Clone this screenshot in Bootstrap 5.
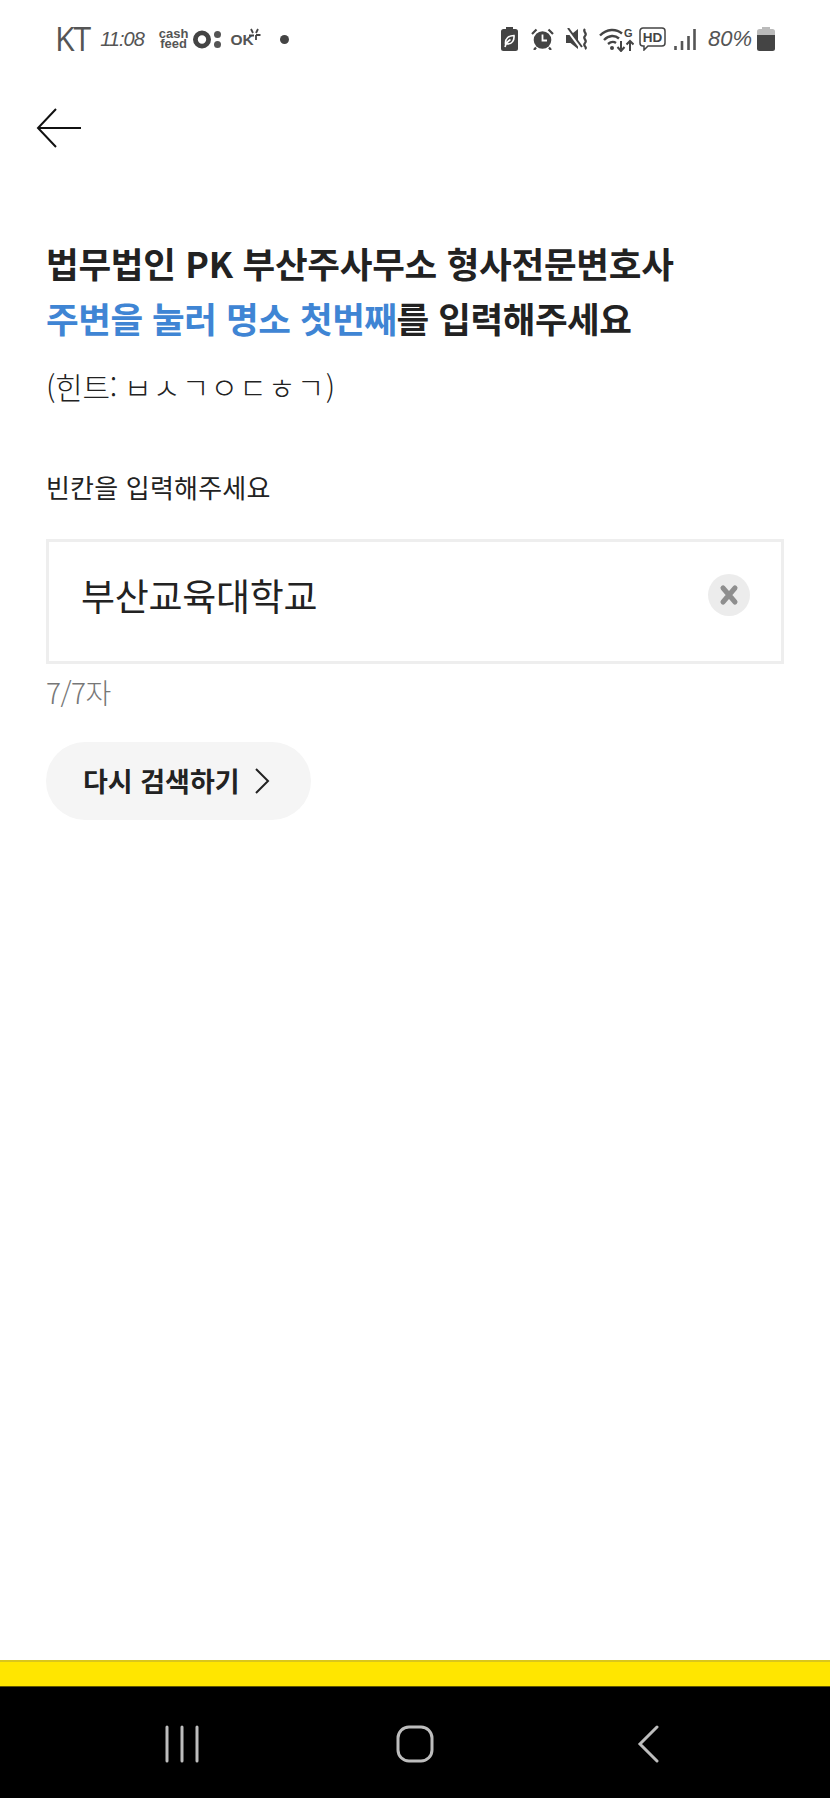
<!DOCTYPE html>
<html lang="ko">
  <head>
    <meta charset="UTF-8" />
    <meta name="viewport" content="width=device-width, initial-scale=1.0" />
    <title>빈칸 입력</title>
    <link
      href="https://cdn.jsdelivr.net/npm/bootstrap@5.3.2/dist/css/bootstrap.min.css"
      rel="stylesheet"
    />
    <style>
      html,
      body {
        height: 100%;
      }
      body {
        font-family: "Noto Sans CJK KR", "Noto Sans", sans-serif;
        color: #222;
      }
      /* status bar */
      .status-row {
        height: 78px;
        padding: 0 55px 0 55px;
        color: #555;
      }
      .status-carrier {
        font-family: "Open Sans", sans-serif;
        font-size: 32px;
        font-weight: 400;
        line-height: 1;
        letter-spacing: -1px;
      }
      .status-clock {
        font-family: "Liberation Sans", sans-serif;
        font-size: 20px;
        font-style: italic;
        font-weight: 400;
        line-height: 1;
        letter-spacing: -1px;
        margin-left: 10px;
      }
      .status-cash {
        font-family: "Liberation Sans", sans-serif;
        font-size: 13px;
        font-weight: 700;
        line-height: 10px;
        text-align: center;
        margin-left: 15px;
      }
      .status-coin {
        width: 29px;
        height: 19px;
        margin-left: 5px;
      }
      .status-ok {
        font-family: "Liberation Sans", sans-serif;
        font-size: 15.5px;
        font-weight: 700;
        line-height: 1;
        margin-left: 8px;
        margin-top: 2px;
      }
      .status-spark {
        width: 13px;
        height: 13px;
        margin: 0 0 10px -6px;
      }
      .status-dot {
        width: 9px;
        height: 9px;
        background: #444;
        margin-left: 19px;
      }
      .ic-leaf { width: 17px; height: 24px; }
      .ic-alarm { width: 23px; height: 22px; margin-left: 13px; }
      .ic-mute { width: 23px; height: 22px; margin-left: 12px; }
      .ic-wifi { width: 35px; height: 25px; margin-left: 10px; }
      .ic-hd { width: 27px; height: 24px; margin-left: 5px; }
      .ic-signal { width: 22px; height: 21px; margin-left: 8px; }
      .ic-batt { width: 18px; height: 24px; margin-left: 5px; }
      .status-level {
        font-size: 22px;
        letter-spacing: 0;
        margin-left: 12px;
      }
      /* page */
      .back-arrow {
        width: 46px;
        height: 40px;
        margin: 30px 0 0 36px;
      }
      .page-body {
        padding: 0 46px;
      }
      .page-title {
        font-size: 35.5px;
        font-weight: 700;
        line-height: 55px;
        letter-spacing: -0.25px;
        color: #222;
        margin: 87px 0 0;
      }
      .page-title span {
        letter-spacing: -0.45px;
      }
      .page-title em {
        font-style: normal;
        color: #3f85d4;
      }
      .hint-line {
        font-size: 30px;
        font-weight: 300;
        line-height: 44px;
        letter-spacing: -0.3px;
        margin: 19px 0 0;
      }
      .hint-line span {
        letter-spacing: 1.2px;
        margin-left: -1px;
      }
      .field-label {
        display: block;
        font-size: 26px;
        font-weight: 400;
        line-height: 38px;
        letter-spacing: 0.2px;
        margin: 60px 0 33px;
      }
      .blank-box {
        height: 125px;
        border: 3px solid #eee;
        padding: 0 31px 14px 32px;
      }
      .blank-box .form-control {
        font-size: 37px;
        font-weight: 400;
        line-height: 50px;
        color: #222;
        padding: 0;
        letter-spacing: -0.3px;
      }
      .blank-clear {
        width: 42px;
        height: 42px;
        background: #ececec;
        border: 0;
      }
      .blank-clear svg {
        width: 20px;
        height: 22px;
      }
      .blank-count {
        font-size: 28px;
        font-weight: 300;
        line-height: 40px;
        letter-spacing: -0.5px;
        color: #777;
        margin-top: 8px;
      }
      .retry-btn {
        height: 78px;
        width: 265px;
        margin-top: 30px;
        background: #f5f5f5;
        border: 0;
        color: #222;
        font-size: 27px;
        font-weight: 700;
        letter-spacing: 0;
        padding: 0 0 0 37px;
        gap: 14px;
      }
      .retry-btn svg {
        width: 16px;
        height: 26px;
      }
      /* bottom */
      .kakao-strip {
        height: 27px;
        background: #ffe600;
        border-top: 2px solid #d9c61c;
        border-bottom: 1px solid #5f5600;
      }
      .nav-strip {
        height: 111px;
        background: #000;
        padding-top: 3px;
      }
      .nav-strip svg {
        height: 38px;
      }
      .nav-recent { width: 34px; margin-left: 165px; }
      .nav-home { width: 38px; margin-left: 197px; }
      .nav-back { width: 22px; margin-left: 203px; }
    </style>
  </head>
  <body class="d-flex flex-column bg-white">
    <div class="status-row d-flex align-items-center justify-content-between">
      <div class="d-flex align-items-center">
        <span class="status-carrier">KT</span>
        <span class="status-clock">11:08</span>
        <span class="status-cash">cash<br />feed</span>
        <svg class="status-coin" viewBox="0 0 29 19">
          <circle cx="9" cy="9.500" r="6.600" fill="none" stroke="#444" stroke-width="4.800" />
          <circle cx="24.500" cy="4.500" r="3.500" fill="#555" />
          <circle cx="24.500" cy="14.500" r="3.500" fill="#555" />
        </svg>
        <span class="status-ok">OK</span>
        <svg class="status-spark" viewBox="0 0 13 13">
          <path d="M3 1l2 4M10 1L8 5M1 7.500h5M8 7h4.500M8 7v5" fill="none" stroke="#444" stroke-width="1.800" />
        </svg>
        <span class="status-dot rounded-circle"></span>
      </div>
      <div class="d-flex align-items-center">
        <svg class="ic-leaf" viewBox="0 0 17 24">
          <path d="M5 0h7v2h2.500A2.500 2.500 0 0 1 17 4.500V21.500A2.500 2.500 0 0 1 14.500 24h-12A2.500 2.500 0 0 1 0 21.500V4.500A2.500 2.500 0 0 1 2.500 2H5z" fill="#444" />
          <path d="M4.500 17C4 11 8 8.500 13 8.500c.5 5-2 8.500-6.500 8.500zM4 20c1-4 3-6 5.500-7.500" fill="none" stroke="#fff" stroke-width="1.600" />
        </svg>
        <svg class="ic-alarm" viewBox="0 0 23 22">
          <circle cx="11.500" cy="12" r="8.800" fill="#444" />
          <path d="M11.500 6.500V12.500H16" fill="none" stroke="#fff" stroke-width="1.800" />
          <path d="M1 6L5.500 1.500M22 6L17.500 1.500M5 19.500L3 22M18 19.500L20 22" stroke="#444" stroke-width="2.200" fill="none" />
        </svg>
        <svg class="ic-mute" viewBox="0 0 23 22">
          <path d="M0 7h4.500L12 1v20L4.500 15H0z" fill="#444" />
          <path d="M1 1l14 19" stroke="#fff" stroke-width="3" />
          <path d="M2 0l14 19" stroke="#444" stroke-width="2" />
          <path d="M19 1c-3 3 3 4 0 7s3 4 0 7 3 4 0 6" fill="none" stroke="#444" stroke-width="2.200" />
        </svg>
        <svg class="ic-wifi" viewBox="0 0 35 25">
          <path d="M1 8.500C8 1.500 17 1.500 23 6.500M5 13c5-5 11-5 15-1.500M9 17c3-2.500 6-2.500 8-1" fill="none" stroke="#444" stroke-width="2.400" />
          <circle cx="13" cy="21" r="2" fill="#444" />
          <path d="M22 14v9M18.500 20l3.500 4 3.500-4M31 24v-10M27.500 17.500L31 14l3.500 3.500" fill="none" stroke="#444" stroke-width="2" />
          <text x="25" y="9.500" font-family="Liberation Sans, sans-serif" font-size="11" font-weight="700" fill="#444">G</text>
        </svg>
        <svg class="ic-hd" viewBox="0 0 27 24">
          <path d="M4 1h19a3 3 0 0 1 3 3v12a3 3 0 0 1-3 3H9l-4 4v-4H4a3 3 0 0 1-3-3V4a3 3 0 0 1 3-3z" fill="none" stroke="#444" stroke-width="1.500" />
          <text x="13.500" y="15" text-anchor="middle" font-family="Liberation Sans, sans-serif" font-size="13.500" font-weight="700" fill="#444">HD</text>
        </svg>
        <svg class="ic-signal" viewBox="0 0 22 21">
          <path d="M1.500 21v-4M8 21v-9M14.500 21v-14M20.500 21V0" fill="none" stroke="#555" stroke-width="2.600" />
        </svg>
        <span class="status-clock status-level">80%</span>
        <svg class="ic-batt" viewBox="0 0 18 24">
          <path d="M5 0h8v2h2.500A2.500 2.500 0 0 1 18 4.500V8H0V4.500A2.500 2.500 0 0 1 2.500 2H5z" fill="#bbb" />
          <path d="M0 8h18v13.500a2.500 2.500 0 0 1-2.500 2.500h-13A2.500 2.500 0 0 1 0 21.500z" fill="#444" />
        </svg>
      </div>
    </div>

    <svg class="back-arrow flex-shrink-0" viewBox="0 0 46 40">
      <path d="M20 1L2 20l18 19M2 20h43" fill="none" stroke="#111" stroke-width="2" />
    </svg>

    <main class="page-body flex-grow-1">
      <h1 class="page-title">
        법무법인 PK 부산주사무소 형사전문변호사<br />
        <span><em>주변을 눌러 명소 첫번째</em>를 입력해주세요</span>
      </h1>
      <p class="hint-line">(힌트: <span>ㅂㅅㄱㅇㄷㅎㄱ</span>)</p>
      <label class="field-label" for="blankInput">빈칸을 입력해주세요</label>
      <div class="blank-box d-flex align-items-center gap-2">
        <input
          id="blankInput"
          class="form-control border-0 rounded-0 shadow-none"
          type="text"
          value="부산교육대학교"
        />
        <button type="button" class="blank-clear rounded-circle d-flex align-items-center justify-content-center flex-shrink-0 p-0" aria-label="지우기">
          <svg viewBox="0 0 20 22">
            <path d="M4 4l12 14M16 4L4 18" stroke="#8e8e8e" stroke-width="5" stroke-linecap="round" />
          </svg>
        </button>
      </div>
      <div class="blank-count">7/7자</div>
      <button type="button" class="retry-btn btn rounded-pill d-flex align-items-center">
        다시 검색하기
        <svg viewBox="0 0 16 26">
          <path d="M2 1l12 12L2 25" fill="none" stroke="#222" stroke-width="2" />
        </svg>
      </button>
    </main>

    <div class="kakao-strip flex-shrink-0"></div>
    <div class="nav-strip d-flex align-items-center flex-shrink-0">
      <svg class="nav-recent" viewBox="0 0 34 38">
        <path d="M2 2v34M17 2v34M32 2v34" stroke="#bdbdbd" stroke-width="3" stroke-linecap="round" />
      </svg>
      <svg class="nav-home" viewBox="0 0 38 38">
        <rect x="2" y="2" width="34" height="34" rx="11" fill="none" stroke="#bdbdbd" stroke-width="3" />
      </svg>
      <svg class="nav-back" viewBox="0 0 22 38">
        <path d="M20 2L3 19l17 17" fill="none" stroke="#bdbdbd" stroke-width="3" stroke-linecap="round" />
      </svg>
    </div>

    <script src="https://cdn.jsdelivr.net/npm/bootstrap@5.3.2/dist/js/bootstrap.bundle.min.js"></script>
  </body>
</html>
